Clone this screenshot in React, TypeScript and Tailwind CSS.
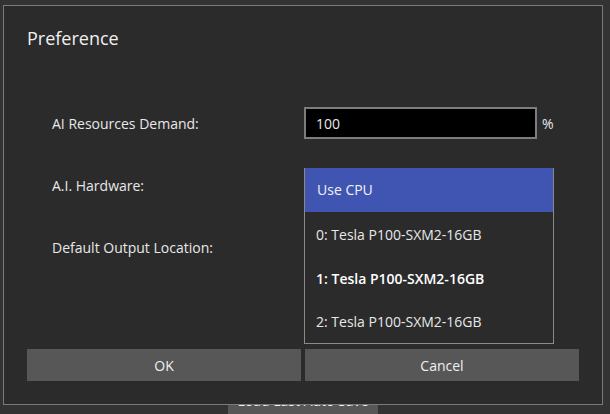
import React from "react";

export default function App() {
  const font = { fontFamily: '"Open Sans", "Noto Sans", sans-serif' };
  return (
    <div className="relative w-[610px] h-[414px] bg-[#333333] overflow-hidden text-[#e8e8e8]" style={font}>
      {/* button behind the dialog */}
      <div className="absolute left-[228px] top-[384px] w-[150px] h-[40px] bg-[#575757] flex items-center justify-center text-[14px] leading-[16px] text-[#f0f0f0]">
        <span className="mt-[-6px]">Load Last Auto Save</span>
      </div>

      {/* dialog */}
      <div className="absolute left-[3px] top-[5px] w-[600px] h-[400px] bg-[#2b2b2b] border border-[#7a7a7a] flex flex-col">
        <div className="ml-[23px] mt-[20px] text-[18px] leading-[24px] text-[#f0f0f0]">Preference</div>

        <div className="mt-[57px] flex flex-col gap-[30px]">
          <div className="flex items-center h-[32px]">
            <div className="ml-[48px] w-[252px] text-[14px]">AI Resources Demand:</div>
            <div className="w-[233px] h-[32px] bg-black border-2 border-[#7d7d7d] flex items-center pl-[10px] text-[14px]">100</div>
            <div className="ml-[5px] text-[14px]">%</div>
          </div>

          <div className="flex items-center h-[32px]">
            <div className="ml-[48px] w-[252px] text-[14px]">A.I. Hardware:</div>
            <div className="relative w-[250px] h-[32px]">
              <div className="absolute left-0 top-[-1px] w-[250px] border border-[#8a8a8a] border-t-0 bg-[#2b2b2b] flex flex-col z-10 text-[14px]">
                <div className="h-[44px] bg-[#4055b2] flex items-center pl-[12px] pb-[1px] text-[#f2f2f2]">Use CPU</div>
                <div className="h-[44px] flex items-center pl-[11px]">0: Tesla P100-SXM2-16GB</div>
                <div className="h-[44px] flex items-center pl-[11px] font-semibold text-white">1: Tesla P100-SXM2-16GB</div>
                <div className="h-[43px] flex items-center pl-[11px]">2: Tesla P100-SXM2-16GB</div>
              </div>
            </div>
          </div>

          <div className="flex items-center h-[32px]">
            <div className="ml-[48px] w-[252px] text-[14px]">Default Output Location:</div>
          </div>
        </div>

        <div className="mt-[86px] ml-[23px] flex gap-[4px]">
          <button className="w-[274px] h-[32px] bg-[#575757] text-[14px] text-[#f0f0f0] flex items-center justify-center">OK</button>
          <button className="w-[274px] h-[32px] bg-[#575757] text-[14px] text-[#f0f0f0] flex items-center justify-center">Cancel</button>
        </div>
      </div>
    </div>
  );
}
